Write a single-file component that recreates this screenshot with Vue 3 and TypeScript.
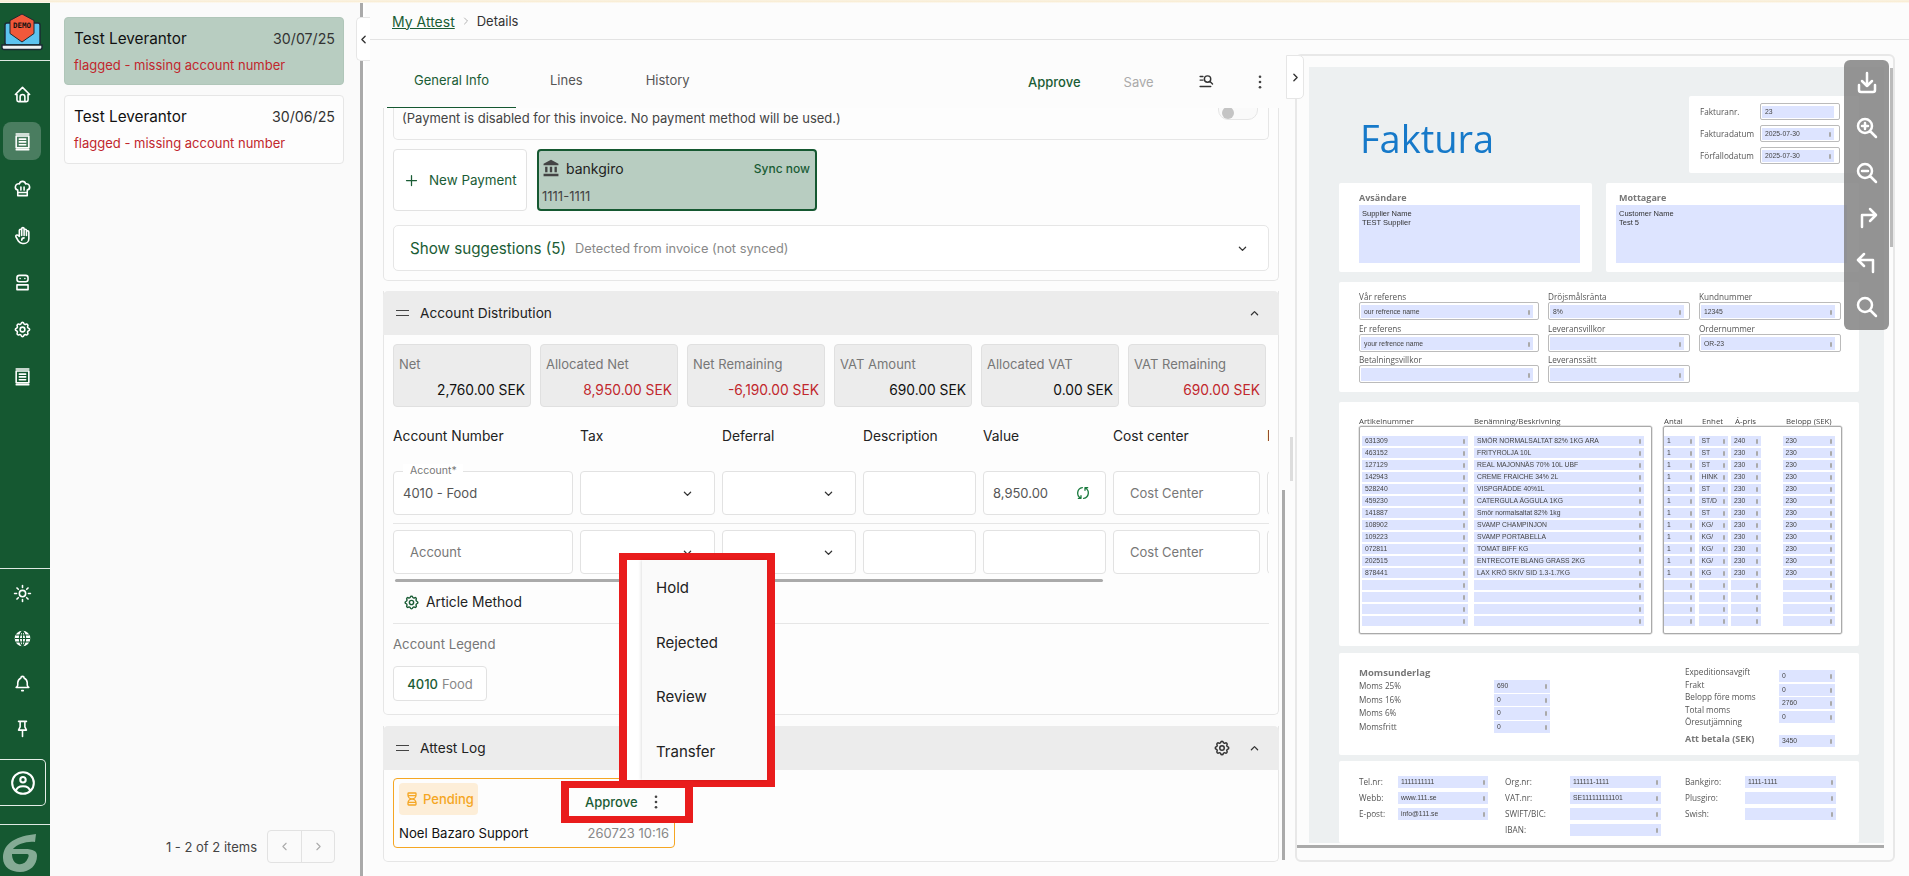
<script setup lang="ts">
const icons: Record<string, string> = {
  home: 'M5 12H3l9-9 9 9h-2v7a2 2 0 0 1-2 2H7a2 2 0 0 1-2-2zM9 21v-6a3 3 0 0 1 6 0v6',
  receipt: 'M4 5h16v15H4zM8 9h8M8 12.5h8M8 16h8M4 2.5h16M4 22.5h16',
  chef: 'M12 3c1.9 0 3.5 1.35 3.9 3.15a4 4 0 0 1 2.1 7.72V21H6v-7.13a4 4 0 1 1 2.1-7.72A4 4 0 0 1 12 3zM6.2 17H18M10 10v4M14 10v4',
  hand: 'M8 13V5.5a1.5 1.5 0 0 1 3 0V12M11 5.5v-2a1.5 1.5 0 1 1 3 0V12M14 5.5a1.5 1.5 0 0 1 3 0V12M17 7.5a1.5 1.5 0 0 1 3 0V16a6 6 0 0 1-6 6h-2a6 6 0 0 1-5-2.7c-.3-.5-1.4-2.4-3.3-5.7a1.5 1.5 0 0 1 .5-2 1.9 1.9 0 0 1 2.3.3L8 13M11 18c0-2 1-3 3-3',
  robot: 'M8 3h8a3 3 0 0 1 3 3v2a3 3 0 0 1-3 3H8a3 3 0 0 1-3-3V6a3 3 0 0 1 3-3zM9 7h.01M15 7h.01M5 15h14v6H5z',
  gear: 'M10.325 4.317c.426-1.756 2.924-1.756 3.35 0a1.724 1.724 0 0 0 2.573 1.066c1.543-.94 3.31.826 2.37 2.37a1.724 1.724 0 0 0 1.065 2.572c1.756.426 1.756 2.924 0 3.35a1.724 1.724 0 0 0-1.066 2.573c.94 1.543-.826 3.31-2.37 2.37a1.724 1.724 0 0 0-2.572 1.065c-.426 1.756-2.924 1.756-3.35 0a1.724 1.724 0 0 0-2.573-1.066c-1.543.94-3.31-.826-2.37-2.37a1.724 1.724 0 0 0-1.065-2.572c-1.756-.426-1.756-2.924 0-3.35a1.724 1.724 0 0 0 1.066-2.573c-.94-1.543.826-3.31 2.37-2.37 1 .608 2.296.07 2.572-1.065zM9 12a3 3 0 1 0 6 0 3 3 0 0 0-6 0',
  sun: 'M8 12a4 4 0 1 0 8 0 4 4 0 0 0-8 0M2 12h2.5M19.5 12H22M12 2v2.5M12 19.5V22M5 5l1.7 1.7M19 5l-1.7 1.7M17.3 17.3 19 19M6.7 17.3 5 19',
  bell: 'M10 5a2 2 0 1 1 4 0 7 7 0 0 1 4 6v3a4 4 0 0 0 2 3H4a4 4 0 0 0 2-3v-3a7 7 0 0 1 4-6M11 21h2',
  pin: 'M7 3h10M9 3v7l-2 4h10l-2-4V3M12 14v8',
  profile: 'M12 2a10 10 0 1 0 0 20 10 10 0 0 0 0-20zM9.5 9a2.5 2.5 0 1 0 5 0 2.5 2.5 0 0 0-5 0M5.5 19.5C6 16.5 8.5 15 12 15s6 1.5 6.5 4.5',
  download: 'M4 14v5a2 2 0 0 0 2 2h12a2 2 0 0 0 2-2v-5M7 10l5 5 5-5M12 2v13',
  zoomIn: 'M3 10a7 7 0 1 0 14 0 7 7 0 0 0-14 0M21 21l-6-6M7 10h6M10 7v6',
  zoomOut: 'M3 10a7 7 0 1 0 14 0 7 7 0 0 0-14 0M21 21l-6-6M7 10h6',
  right: 'M7 22V10h13M15 4l6 6-6 6',
  left: 'M18 22V10H4M9 4l-6 6 6 6',
  search: 'M3 10a7 7 0 1 0 14 0 7 7 0 0 0-14 0M21 21l-6-6',
  sync: 'M20 11a8.1 8.1 0 0 0-15.5-2M4 5v4h4M4 13a8.1 8.1 0 0 0 15.5 2M20 19v-4h-4',
  hourglass: 'M6.5 7h11M6.5 17h11M6 20v-2a6 6 0 1 1 12 0v2a1 1 0 0 1-1 1H7a1 1 0 0 1-1-1zM6 4v2a6 6 0 1 0 12 0V4a1 1 0 0 0-1-1H7a1 1 0 0 0-1 1z',
  listSearch: 'M3 5h4M3 10h4M3 19h15M9 8.5a4.5 4.5 0 1 0 9 0 4.5 4.5 0 0 0-9 0M17 12l3.5 3.5',
  down: 'M7 10l5 5 5-5',
  up: 'M7 14l5-5 5 5',
  lt: 'M15 6l-6 6 6 6',
  gt: 'M9 6l6 6-6 6',
  plus: 'M12 4v16M4 12h16',
}

const navTop = [
  { name: 'home', active: false },
  { name: 'receipt', active: true },
  { name: 'chef', active: false },
  { name: 'hand', active: false },
  { name: 'robot', active: false },
  { name: 'gear', active: false },
  { name: 'receipt', active: false },
]

const listItems = [
  { title: 'Test Leverantor', date: '30/07/25', selected: true },
  { title: 'Test Leverantor', date: '30/06/25', selected: false },
]

const stats = [
  { label: 'Net', value: '2,760.00 SEK', bad: false },
  { label: 'Allocated Net', value: '8,950.00 SEK', bad: true },
  { label: 'Net Remaining', value: '-6,190.00 SEK', bad: true },
  { label: 'VAT Amount', value: '690.00 SEK', bad: false },
  { label: 'Allocated VAT', value: '0.00 SEK', bad: false },
  { label: 'VAT Remaining', value: '690.00 SEK', bad: true },
]

const columns = ['Account Number', 'Tax', 'Deferral', 'Description', 'Value', 'Cost center', 'Project']
const menuItems = ['Hold', 'Rejected', 'Review', 'Transfer']
const toolIcons = ['download', 'zoomIn', 'zoomOut', 'right', 'left', 'search']

const metaRows = [
  { label: 'Fakturanr.', value: '23', mark: false },
  { label: 'Fakturadatum', value: '2025-07-30', mark: true },
  { label: 'Förfallodatum', value: '2025-07-30', mark: true },
]

const refFields = [
  { label: 'Vår referens', value: 'our refrence name' },
  { label: 'Dröjsmålsränta', value: '8%' },
  { label: 'Kundnummer', value: '12345' },
  { label: 'Er referens', value: 'your refrence name' },
  { label: 'Leveransvillkor', value: '' },
  { label: 'Ordernummer', value: 'OR-23' },
  { label: 'Betalningsvillkor', value: '' },
  { label: 'Leveranssätt', value: '' },
]

const lines: string[][] = [
  ['631309', 'SMÖR NORMALSALTAT 82% 1KG ARA', '1', 'ST', '240', '230'],
  ['463152', 'FRITYROLJA 10L', '1', 'ST', '230', '230'],
  ['127129', 'REAL MAJONNÄS 70% 10L UBF', '1', 'ST', '230', '230'],
  ['142943', 'CREME FRAICHE 34% 2L', '1', 'HINK', '230', '230'],
  ['528240', 'VISPGRÄDDE 40%1L', '1', 'ST', '230', '230'],
  ['459230', 'CATERGULA ÄGGULA 1KG', '1', 'ST/D', '230', '230'],
  ['141887', 'Smör normalsaltat 82% 1kg', '1', 'ST', '230', '230'],
  ['108902', 'SVAMP CHAMPINJON', '1', 'KG/', '230', '230'],
  ['109223', 'SVAMP PORTABELLA', '1', 'KG/', '230', '230'],
  ['072811', 'TOMAT BIFF KG', '1', 'KG/', '230', '230'],
  ['202515', 'ENTRECOTE BLANG GRASS 2KG', '1', 'KG/', '230', '230'],
  ['878441', 'LAX KRÖ SKIV SID 1.3-1.7KG', '1', 'KG', '230', '230'],
  ['', '', '', '', '', ''],
  ['', '', '', '', '', ''],
  ['', '', '', '', '', ''],
  ['', '', '', '', '', ''],
]

const momsLeft = [
  { label: 'Moms 25%', value: '690' },
  { label: 'Moms 16%', value: '0' },
  { label: 'Moms 6%', value: '0' },
  { label: 'Momsfritt', value: '0' },
]
const momsRightLabels = ['Expeditionsavgift', 'Frakt', 'Belopp före moms', 'Total moms', 'Öresutjämning']
const momsRightValues = ['0', '0', '2760', '0']

const footerCols = [
  [
    { label: 'Tel.nr:', value: '1111111111' },
    { label: 'Webb:', value: 'www.111.se' },
    { label: 'E-post:', value: 'info@111.se' },
  ],
  [
    { label: 'Org.nr:', value: '111111-1111' },
    { label: 'VAT.nr:', value: 'SE111111111101' },
    { label: 'SWIFT/BIC:', value: '' },
    { label: 'IBAN:', value: '' },
  ],
  [
    { label: 'Bankgiro:', value: '1111-1111' },
    { label: 'Plusgiro:', value: '' },
    { label: 'Swish:', value: '' },
  ],
]
</script>

<template>
  <div class="root">
    <div class="strip"></div>
    <div class="shell">
      <aside class="side">
        <div class="brand">
          <svg class="solid" viewBox="0 0 44 44" width="44" height="44">
            <rect x="5" y="12" width="35" height="22" rx="2" fill="#5cc4f0" stroke="#1b2a33" stroke-width="1.4" />
            <path d="M2 34h40v2.5a2 2 0 0 1-2 2H4a2 2 0 0 1-2-2z" fill="#eef3f5" stroke="#1b2a33" stroke-width="1.4" />
            <path d="M22 3l12 6.500v13L22 31 10 22.500v-13z" fill="#f1583a" stroke="#1b2a33" stroke-width="1" />
            <text x="22" y="17" text-anchor="middle" class="demo">DEMO</text>
          </svg>
        </div>
        <nav class="nav">
          <div v-for="(n, i) in navTop" :key="i" class="nav-item" :class="{ on: n.active }">
            <svg class="ic-nav" viewBox="0 0 24 24"><path :d="icons[n.name]" /></svg>
          </div>
        </nav>
        <div class="side-bottom">
          <div class="b-item"><svg class="ic-nav" viewBox="0 0 24 24"><path :d="icons.sun" /></svg></div>
          <div class="b-item">
            <svg class="solid" viewBox="0 0 24 24" width="17" height="17">
              <circle cx="12" cy="12" r="11" fill="#fff" />
              <path d="M1 12h22M2.500 7h19M2.500 17h19M12 1c-6 6-6 16 0 22M12 1c6 6 6 16 0 22M12 1v22" fill="none" stroke="#155831" stroke-width="1.500" />
            </svg>
          </div>
          <div class="b-item"><svg class="ic-nav" viewBox="0 0 24 24"><path :d="icons.bell" /></svg></div>
          <div class="b-item"><svg class="ic-nav" viewBox="0 0 24 24"><path :d="icons.pin" /></svg></div>
          <div class="profile"><svg class="ic-profile" viewBox="0 0 24 24"><path :d="icons.profile" /></svg></div>
        </div>
        <div class="side-logo">
          <svg class="solid" viewBox="0 0 34 38" width="34" height="38">
            <path fill="#85ab95" fill-rule="evenodd" d="M33 0C15 2 0 8 0 24c0 9 8 14 17 14 10 0 17-7 17-16 0-5-4-7-12-7H10c4-5 14-8 22-7zM9 20h15c2 0 2 2 1 4-2 5-6 7-10 6-4-1-6-5-6-10z" />
          </svg>
        </div>
      </aside>

      <section class="list">
        <div class="list-cards">
          <article v-for="(it, i) in listItems" :key="i" class="l-card" :class="{ sel: it.selected }">
            <div class="l-top">
              <span class="l-title">{{ it.title }}</span>
              <span class="l-date">{{ it.date }}</span>
            </div>
            <div class="l-flag">flagged - missing account number</div>
          </article>
        </div>
        <div class="pager">
          <span class="pager-text">1 - 2 of 2 items</span>
          <div class="pager-btns">
            <span class="pg"><svg class="ic-pg" viewBox="0 0 24 24"><path :d="icons.lt" /></svg></span>
            <span class="pg"><svg class="ic-pg" viewBox="0 0 24 24"><path :d="icons.gt" /></svg></span>
          </div>
        </div>
        <div class="collapse-left"><svg class="ic-col" viewBox="0 0 24 24"><path :d="icons.lt" /></svg></div>
      </section>

      <div class="splitter"></div>

      <main class="main">
        <header class="crumbs">
          <a class="crumb-link">My Attest</a>
          <svg class="ic-crumb" viewBox="0 0 24 24"><path :d="icons.gt" /></svg>
          <span class="crumb-cur">Details</span>
        </header>

        <div class="workspace">
          <div class="detail">
            <div class="tabs">
              <div class="tab active">General Info</div>
              <div class="tab t-lines">Lines</div>
              <div class="tab t-history">History</div>
              <div class="actions">
                <span class="act-approve">Approve</span>
                <span class="act-save">Save</span>
                <svg class="ic-act" viewBox="0 0 24 24"><path :d="icons.listSearch" /></svg>
                <svg class="ic-dots" viewBox="0 0 4 16"><circle cx="2" cy="2" r="1.500" /><circle cx="2" cy="8" r="1.500" /><circle cx="2" cy="14" r="1.500" /></svg>
              </div>
            </div>

            <div class="scroll">
              <section class="card pay-card">
                <div class="pay-off">
                  <span>(Payment is disabled for this invoice. No payment method will be used.)</span>
                  <span class="toggle"><i></i></span>
                </div>
                <div class="pay-row">
                  <div class="new-pay">
                    <svg class="ic-plus" viewBox="0 0 24 24"><path :d="icons.plus" /></svg>
                    <span>New Payment</span>
                  </div>
                  <div class="bank">
                    <div class="bank-top">
                      <svg class="ic-bank solid" viewBox="0 0 23 23"><path d="M4 10v7h3v-7H4zm6 0v7h3v-7h-3zM2 22h19v-3H2v3zm14-12v7h3v-7h-3zm-4.500-9L2 6v2h19V6l-9.500-5z" /></svg>
                      <span class="bank-name">bankgiro</span>
                      <span class="bank-sync">Sync now</span>
                    </div>
                    <div class="bank-no">1111-1111</div>
                  </div>
                </div>
                <div class="suggest">
                  <span class="sug-main">Show suggestions (5)</span>
                  <span class="sug-sub">Detected from invoice (not synced)</span>
                  <svg class="ic-chev sug-chev" viewBox="0 0 24 24"><path :d="icons.down" /></svg>
                </div>
              </section>

              <section class="card acc-card">
                <div class="sec-head">
                  <span class="burger"></span>
                  <span class="sec-title">Account Distribution</span>
                  <svg class="ic-chev sec-chev" viewBox="0 0 24 24"><path :d="icons.up" /></svg>
                </div>
                <div class="sec-body">
                  <div class="stats">
                    <div v-for="s in stats" :key="s.label" class="stat">
                      <div class="stat-label">{{ s.label }}</div>
                      <div class="stat-value" :class="{ bad: s.bad }">{{ s.value }}</div>
                    </div>
                  </div>

                  <div class="table">
                    <div class="t-row t-head">
                      <span v-for="c in columns" :key="c">{{ c }}</span>
                    </div>
                    <div class="t-row t-r1">
                      <div class="fld"><span class="float">Account*</span><span class="v">4010 - Food</span></div>
                      <div class="fld sel"><svg class="ic-chev" viewBox="0 0 24 24"><path :d="icons.down" /></svg></div>
                      <div class="fld sel"><svg class="ic-chev" viewBox="0 0 24 24"><path :d="icons.down" /></svg></div>
                      <div class="fld"></div>
                      <div class="fld val"><span class="v">8,950.00</span><svg class="ic-sync" viewBox="0 0 24 24"><path :d="icons.sync" /></svg></div>
                      <div class="fld ph">Cost Center</div>
                      <div class="fld"></div>
                    </div>
                    <div class="t-row t-r2">
                      <div class="fld ph">Account</div>
                      <div class="fld sel"><svg class="ic-chev" viewBox="0 0 24 24"><path :d="icons.down" /></svg></div>
                      <div class="fld sel"><svg class="ic-chev" viewBox="0 0 24 24"><path :d="icons.down" /></svg></div>
                      <div class="fld"></div>
                      <div class="fld"></div>
                      <div class="fld ph">Cost Center</div>
                      <div class="fld"></div>
                    </div>
                    <div class="h-bar"></div>
                  </div>

                  <div class="method">
                    <svg class="ic-method" viewBox="0 0 24 24"><path :d="icons.gear" /></svg>
                    <span>Article Method</span>
                  </div>
                  <div class="legend-title">Account Legend</div>
                  <div class="chip"><b>4010</b> <span>Food</span></div>
                </div>
              </section>

              <section class="card log-card">
                <div class="sec-head">
                  <span class="burger"></span>
                  <span class="sec-title">Attest Log</span>
                  <svg class="ic-gear" viewBox="0 0 24 24"><path :d="icons.gear" /></svg>
                  <svg class="ic-chev sec-chev2" viewBox="0 0 24 24"><path :d="icons.up" /></svg>
                </div>
                <div class="log-body">
                  <div class="log-item">
                    <div class="pending">
                      <svg class="ic-hour" viewBox="0 0 24 24"><path :d="icons.hourglass" /></svg>
                      <span>Pending</span>
                    </div>
                    <div class="log-bottom">
                      <span class="log-name">Noel Bazaro Support</span>
                      <span class="log-date">260723 10:16</span>
                    </div>
                    <div class="mark-approve">
                      <span class="ma-text">Approve</span>
                      <svg class="ic-dots" viewBox="0 0 4 16"><circle cx="2" cy="2" r="1.500" /><circle cx="2" cy="8" r="1.500" /><circle cx="2" cy="14" r="1.500" /></svg>
                    </div>
                    <div class="mark-menu">
                      <ul class="menu">
                        <li v-for="m in menuItems" :key="m">{{ m }}</li>
                      </ul>
                    </div>
                  </div>
                </div>
              </section>

              <div class="v-bar"></div>
              <div class="v-bar2"></div>
            </div>
          </div>

          <div class="viewer">
            <div class="collapse-right"><svg class="ic-col" viewBox="0 0 24 24"><path :d="icons.gt" /></svg></div>
            <div class="sheet">
              <div class="s-head">
                <div class="faktura">Faktura</div>
                <div class="s-card meta">
                  <div v-for="r in metaRows" :key="r.label" class="meta-row">
                    <span class="p-label">{{ r.label }}</span>
                    <div class="pbox"><div class="pf" :class="{ nomark: !r.mark }">{{ r.value }}</div></div>
                  </div>
                </div>
              </div>

              <div class="parties">
                <div class="s-card party">
                  <div class="p-title">Avsändare</div>
                  <div class="p-area">Supplier Name<br />TEST Supplier</div>
                </div>
                <div class="s-card party party2">
                  <div class="p-title">Mottagare</div>
                  <div class="p-area">Customer Name<br />Test 5</div>
                </div>
              </div>

              <div class="s-card refs">
                <div v-for="f in refFields" :key="f.label" class="ref-cell">
                  <div class="p-label">{{ f.label }}</div>
                  <div class="pbox"><div class="pf">{{ f.value }}</div></div>
                </div>
              </div>

              <div class="s-card items">
                <div class="items-head">
                  <span>Artikelnummer</span><span>Benämning/Beskrivning</span><span>Antal</span><span>Enhet</span><span>Á-pris</span><span>Belopp (SEK)</span>
                </div>
                <div class="items-boxes">
                  <div class="ibox ibox1">
                    <template v-for="(l, i) in lines" :key="'a' + i">
                      <div class="pf">{{ l[0] }}</div>
                      <div class="pf">{{ l[1] }}</div>
                    </template>
                  </div>
                  <div class="ibox ibox2">
                    <template v-for="(l, i) in lines" :key="'b' + i">
                      <div class="pf">{{ l[2] }}</div>
                      <div class="pf">{{ l[3] }}</div>
                      <div class="pf">{{ l[4] }}</div>
                      <div class="pf far">{{ l[5] }}</div>
                    </template>
                  </div>
                </div>
              </div>

              <div class="s-card moms">
                <div class="moms-left">
                  <div class="p-title m-title">Momsunderlag</div>
                  <div v-for="m in momsLeft" :key="m.label" class="moms-row">
                    <span class="p-label">{{ m.label }}</span>
                    <div class="pf">{{ m.value }}</div>
                  </div>
                </div>
                <div class="moms-right">
                  <div class="mr-labels">
                    <span v-for="l in momsRightLabels" :key="l" class="p-label">{{ l }}</span>
                    <span class="p-title att">Att betala (SEK)</span>
                  </div>
                  <div class="mr-values">
                    <div v-for="(v, i) in momsRightValues" :key="i" class="pf">{{ v }}</div>
                    <div class="pf att-v">3450</div>
                  </div>
                </div>
              </div>

              <div class="s-card foot">
                <div v-for="(col, i) in footerCols" :key="i" class="foot-col" :class="'fc' + i">
                  <div v-for="f in col" :key="f.label" class="foot-row">
                    <span class="p-label">{{ f.label }}</span>
                    <div class="pf">{{ f.value }}</div>
                  </div>
                </div>
              </div>
            </div>
            <div class="viewer-hbar"></div>
            <div class="viewer-vbar"></div>
            <div class="toolbar">
              <svg v-for="t in toolIcons" :key="t" class="ic-tool" viewBox="0 0 24 24"><path :d="icons[t]" /></svg>
            </div>
          </div>
        </div>
      </main>
    </div>
  </div>
</template>

<style>
html, body { margin: 0; padding: 0; background: #fcfcfc; }
</style>

<style scoped>
* { box-sizing: border-box; }
.root { width: 1909px; height: 876px; overflow: hidden; display: flex; flex-direction: column; font-family: Inter, "Liberation Sans", sans-serif; color: #222; background: #fcfcfc; }
.strip { height: 3px; flex: none; background: linear-gradient(#fbf5e8, #f8ebd0 40%, #fdfbf6); }
.shell { flex: 1; min-height: 0; display: flex; }

svg:not(.solid) path { fill: none; stroke-linecap: round; stroke-linejoin: round; }

/* sidebar */
.side { width: 50px; flex: none; background: #155831; display: flex; flex-direction: column; }
.brand { height: 58px; flex: none; border-bottom: 1px solid #dfe9e3; padding: 8px 0 0 0; overflow: hidden; }
.demo { font: 700 7.500px "DejaVu Sans Mono", monospace; fill: #111; }
.nav { padding-top: 14px; display: flex; flex-direction: column; gap: 9px; }
.nav-item { width: 38px; height: 38px; margin-left: 3px; border-radius: 8px; display: flex; align-items: center; justify-content: center; }
.nav-item.on { background: #4a7d60; }
.ic-nav { width: 19px; height: 19px; }
.ic-nav path { stroke: #fff; stroke-width: 2; }
.side-bottom { margin-top: auto; border-top: 1px solid #dfe9e3; padding-top: 1px; display: flex; flex-direction: column; }
.b-item { height: 45px; width: 45px; display: flex; align-items: center; justify-content: center; }
.b-item:first-child { margin-top: 1px; }
.profile { width: 46px; height: 47px; margin-top: 8px; border: 1px solid #e5eee8; border-left: 0; border-radius: 0 5px 5px 0; display: flex; align-items: center; justify-content: center; }
.ic-profile { width: 26px; height: 26px; }
.ic-profile path { stroke: #fff; stroke-width: 1.900; }
.side-logo { margin-top: 18px; height: 52px; flex: none; border-top: 1px solid #dfe9e3; padding: 9px 0 0 3px; overflow: hidden; }

/* list */
.list { width: 310px; flex: none; background: #fafafa; position: relative; display: flex; flex-direction: column; }
.list-cards { padding: 14px 16px 0 14px; display: flex; flex-direction: column; gap: 10px; }
.l-card { height: 69px; border: 1px solid #e6e6e6; border-radius: 4px; background: #fdfdfd; padding: 12px 8px 0 9px; }
.l-card.sel { height: 68px; background: #b8cdc1; border-color: #b0c6b9; }
.l-top { display: flex; justify-content: space-between; align-items: center; }
.l-title { font-size: 15.300px; font-weight: 400; color: #111; line-height: 18px; }
.l-date { font-size: 14.200px; color: #333; line-height: 18px; }
.l-flag { margin-top: 9px; font-size: 13px; line-height: 16px; color: #c1272d; }
.pager { margin-top: auto; height: 33px; margin-bottom: 13px; padding-right: 25px; display: flex; align-items: center; justify-content: flex-end; gap: 10px; }
.pager-text { font-size: 13px; color: #444; }
.pager-btns { display: flex; height: 33px; border: 1px solid #e2e2e2; border-radius: 4px; }
.pg { width: 33px; display: flex; align-items: center; justify-content: center; }
.pg + .pg { border-left: 1px solid #e2e2e2; }
.ic-pg { width: 13px; height: 13px; }
.ic-pg path { stroke: #aaa; stroke-width: 2; }
.collapse-left { position: absolute; right: -10px; top: 14px; width: 14px; height: 44px; background: #fff; border: 1px solid #e6e6e6; border-radius: 5px 0 0 5px; border-right: 0; display: flex; align-items: center; justify-content: center; z-index: 3; }
.ic-col { width: 13px; height: 13px; }
.ic-col path { stroke: #333; stroke-width: 2.500; }
.splitter { width: 5px; flex: none; border-left: 3px solid #aaa; background: #fff; }

/* main */
.main { flex: 1; min-width: 0; display: flex; flex-direction: column; }
.crumbs { height: 37px; flex: none; border-bottom: 1px solid #e3e3e3; padding: 0 0 0 27px; display: flex; align-items: center; gap: 5px; font-size: 14px; }
.crumb-link { color: #1a5c35; text-decoration: underline; }
.ic-crumb { width: 12px; height: 12px; }
.ic-crumb path { stroke: #999; stroke-width: 1.500; }
.crumb-cur { color: #333; font-size: 13px; }
.workspace { flex: 1; min-height: 0; display: flex; }

.detail { width: 925px; flex: none; display: flex; flex-direction: column; }
.tabs { height: 68px; flex: none; padding: 0 0 0 22px; display: flex; align-items: stretch; position: relative; }
.tab { font-size: 13px; color: #555; padding-top: 32px; line-height: 16px; }
.tab.active { width: 129px; text-align: center; color: #1a5c35; font-weight: 400; border-bottom: 1px solid #155831; }
.t-lines { margin-left: 34px; }
.t-history { margin-left: 63px; }
.actions { position: absolute; right: 0; top: 0; height: 100%; width: 262px; display: flex; align-items: center; padding-top: 15px; font-size: 13px; }
.act-approve { color: #1a5c35; font-weight: 500; margin-left: 0; }
.act-save { color: #aaa; margin-left: 43px; }
.ic-act { width: 17px; height: 17px; margin-left: 44px; }
.ic-act path { stroke: #333; stroke-width: 2; }
.ic-dots { width: 4px; height: 14px; margin-left: 43px; fill: #444; }

.scroll { flex: 1; min-height: 0; position: relative; padding: 0 11px 0 18px; display: flex; flex-direction: column; gap: 10px; }
.card { border: 1px solid #e6e6e6; border-top: 0; border-radius: 0 0 5px 5px; background: #fdfdfd; }
.pay-card { padding: 0 9px 9px; height: 173px; }
.pay-off { height: 32px; border: 1px solid #e6e6e6; border-top: 0; border-radius: 0 0 5px 5px; display: flex; justify-content: space-between; padding: 0 10px 0 8px; font-size: 13px; color: #444; line-height: 20px; overflow: hidden; }
.toggle { width: 40px; height: 26px; margin-top: -14px; border: 1px solid #e6e6e6; border-radius: 10px; padding: 6px 3px; background: #fafafa; }
.toggle i { display: block; width: 12px; height: 12px; background: #c4c4c4; border-radius: 50%; margin-top: 6px; }
.pay-row { display: flex; gap: 10px; margin-top: 9px; height: 62px; }
.new-pay { width: 134px; border: 1px solid #e2e2e2; border-radius: 4px; background: #fff; display: flex; align-items: center; padding-left: 10px; gap: 10px; color: #1a5c35; font-size: 13.400px; font-weight: 400; }
.ic-plus { width: 15px; height: 15px; }
.ic-plus path { stroke: #1a5c35; stroke-width: 2; }
.bank { width: 280px; border: 2px solid #155831; border-radius: 4px; background: #b8cdc1; padding: 5px 5px 0 3px; }
.bank-top { display: flex; align-items: center; height: 24px; }
.ic-bank { width: 18px; height: 18px; fill: #444; margin-right: 6px; }
.bank-name { font-size: 14px; color: #222; }
.bank-sync { margin-left: auto; font-size: 12px; font-weight: 500; color: #1a5c35; }
.bank-no { margin-top: 8px; font-size: 13px; color: #444; }
.suggest { margin-top: 14px; height: 46px; border: 1px solid #e6e6e6; border-radius: 5px; background: #fff; display: flex; align-items: center; padding-left: 16px; }
.sug-main { font-size: 15.200px; font-weight: 400; color: #1a5c35; }
.sug-sub { font-size: 12.800px; color: #888; margin-left: 9px; }
.sug-chev { margin-left: auto; margin-right: 18px; }
.ic-chev { width: 15px; height: 15px; }
.ic-chev path { stroke: #333; stroke-width: 2; }

.sec-head { height: 44px; background: #ececec; border-radius: 5px 5px 0 0; margin: 0 -1px; display: flex; align-items: center; padding-left: 13px; position: relative; }
.burger { width: 13px; height: 6px; border-top: 1.500px solid #444; border-bottom: 1.500px solid #444; }
.sec-title { margin-left: 11px; font-size: 13.700px; font-weight: 400; color: #222; }
.sec-chev { margin-left: auto; margin-right: 17px; }
.sec-chev2 { margin-left: 16px; margin-right: 17px; }
.ic-gear { margin-left: auto; width: 18px; height: 18px; }
.ic-gear path { stroke: #333; stroke-width: 2; }
.acc-card { height: 424px; }
.sec-body { padding: 9px 9px 0; }
.stats { display: grid; grid-template-columns: repeat(6, 138px); column-gap: 9px; }
.stat { height: 63px; background: #ececec; border: 1px solid #e0e0e0; border-radius: 4px; padding: 10px 5px 0; }
.stat-label { font-size: 13px; color: #777; line-height: 18px; }
.stat-value { margin-top: 8px; text-align: right; font-size: 13.800px; font-weight: 400; color: #111; line-height: 18px; }
.stat-value.bad { color: #c1272d; }

.table { position: relative; overflow: hidden; padding-top: 8px; margin-top: 11px; }
.t-row { display: grid; grid-template-columns: 180px 135px 134px 113px 123px 147px 60px; column-gap: 7px; white-space: nowrap; }
.t-head { height: 20px; font-size: 13.800px; font-weight: 400; color: #222; line-height: 20px; margin-bottom: 25px; }
.t-r1 { padding-bottom: 8px; border-bottom: 1px solid #e6e6e6; }
.t-r2 { padding-top: 6px; padding-bottom: 12px; }
.fld { height: 44px; border: 1px solid #e2e2e2; border-radius: 4px; background: #fff; position: relative; display: flex; align-items: center; padding: 0 9px; font-size: 13px; color: #555; }
.float { position: absolute; left: 9px; top: -8px; background: #fff; padding: 0 6px 0 7px; font-size: 10.500px; line-height: 14px; color: #777; }
.fld.ph { color: #777; padding-left: 16px; }
.fld.sel { justify-content: flex-end; padding-right: 19px; }
.fld.val { justify-content: space-between; padding-right: 14px; }
.ic-sync { width: 16px; height: 16px; transform: rotate(90deg); }
.ic-sync path { stroke: #1a7a3e; stroke-width: 2; }
.h-bar { position: absolute; left: 2px; bottom: 4px; width: 708px; height: 3px; border-radius: 2px; background: #aaa; }

.method { margin-top: 6px; height: 20px; display: flex; align-items: center; padding-left: 10px; gap: 6px; font-size: 13.800px; font-weight: 400; color: #222; }
.ic-method { width: 17px; height: 17px; }
.ic-method path { stroke: #1a5c35; stroke-width: 2; }
.legend-title { border-top: 1px solid #e6e6e6; margin-top: 11px; padding-top: 11px; font-size: 13.200px; font-weight: 400; color: #777; line-height: 18px; }
.chip { margin-top: 13px; width: 94px; height: 35px; border: 1px solid #e2e2e2; border-radius: 4px; background: #fff; display: flex; align-items: center; justify-content: center; gap: 4px; font-size: 13px; }
.chip b { color: #1a5c35; font-weight: 500; }
.chip span { color: #888; }

.log-card { height: 136px; margin-top: 1px; }
.log-body { padding: 8px 9px 0; }
.log-item { position: relative; width: 282px; height: 70px; border: 1px solid #f5a623; border-radius: 4px; background: #fdfdfd; padding: 4px 5px; }
.pending { width: 79px; height: 32px; background: #fdeed8; border-radius: 4px; display: flex; align-items: center; padding-left: 5px; gap: 3px; color: #f5a623; font-size: 13px; font-weight: 500; }
.ic-hour { width: 16px; height: 16px; }
.ic-hour path { stroke: #f5a623; stroke-width: 2; }
.log-bottom { margin-top: 9px; display: flex; justify-content: space-between; font-size: 13.200px; line-height: 18px; }
.log-name { color: #111; font-weight: 400; }
.log-date { color: #888; font-size: 13px; }

.mark-approve { position: absolute; left: 167px; top: 2px; width: 132px; height: 42px; border: solid #e91c1c; border-width: 7px 8px; background: #fdfdfd; display: flex; align-items: center; padding-left: 16px; z-index: 5; }
.ma-text { color: #1a5c35; font-size: 13px; font-weight: 500; }
.mark-approve .ic-dots { margin-left: 16px; }
.mark-menu { position: absolute; left: 225px; top: -226px; width: 156px; height: 234px; border: solid #e91c1c; border-width: 7px 8px; background: #fff; z-index: 4; padding-left: 15px; }
.menu { list-style: none; margin: 0; height: 100%; background: #fafafa; box-shadow: -1px 0 3px rgba(0,0,0,.12); font-size: 15px; color: #222; display: flex; flex-direction: column; padding: 0 0 0 14px; }
.menu li { height: 54.500px; line-height: 55px; }

.v-bar { position: absolute; left: 917px; top: 382px; width: 3px; height: 370px; background: #aaa; }
.v-bar2 { position: absolute; left: 925px; top: 329px; width: 3px; height: 44px; background: #ddd; z-index: 2; }

/* viewer */
.viewer { position: relative; width: 600px; flex: none; margin: 14px 0 0 5px; height: 808px; border: 2px solid #e8e8e8; border-radius: 6px; background: #fcfcfc; }
.collapse-right { position: absolute; left: -11px; top: -1px; width: 18px; height: 44px; background: #fff; border: 1px solid #e6e6e6; border-radius: 0 5px 5px 0; display: flex; align-items: center; justify-content: center; z-index: 3; }
.sheet { position: absolute; left: 12px; top: 11px; width: 575px; height: 776px; background: #edf0f1; overflow: hidden; padding: 29px 25px 0 30px; display: flex; flex-direction: column; color: #555; font-family: "Open Sans", sans-serif; filter: blur(.35px); }
.viewer-hbar { position: absolute; left: 0; top: 789px; width: 587px; height: 3px; background: #aaa; }
.viewer-vbar { position: absolute; left: 593px; top: 12px; width: 3px; height: 179px; background: #bbb; }
.toolbar { position: absolute; left: 547px; top: 4px; width: 45px; height: 270px; border-radius: 6px; background: rgba(130,130,130,.85); display: flex; flex-direction: column; align-items: center; justify-content: space-around; padding: 1px 0; z-index: 4; }
.ic-tool { width: 24px; height: 24px; }
.ic-tool path { stroke: #fff; stroke-width: 2.500; }

.s-card { background: #fff; border-radius: 2px; flex: none; }
.s-head { height: 77px; flex: none; display: flex; justify-content: space-between; }
.faktura { font-size: 38px; font-weight: 400; line-height: 50px; margin: 17px 0 0 21px; color: #1679c9; }
.meta { width: 170px; padding: 7px 0 0 11px; display: flex; flex-direction: column; gap: 5px; }
.meta-row { display: flex; align-items: center; }
.meta-row .p-label { width: 60px; }
.meta-row .pbox { width: 80px; height: 17px; padding-top: 2px; }
.p-label { font-size: 8.200px; line-height: 11px; color: #555; white-space: nowrap; }
.pbox { border: 1.500px solid #bbb; border-radius: 2px; background: #fff; padding: 2px 5px 1px 1px; height: 18px; }
.pf { background: #dde4ff; min-width: 0; height: 100%; display: flex; align-items: center; justify-content: space-between; padding: 1px 3px 0; font: 6.800px/1 "Liberation Sans", sans-serif; color: #444; white-space: nowrap; overflow: hidden; }
.pf::after { content: ""; flex: none; margin-left: auto; width: 2px; height: 5px; border-radius: 1px; background: #aaa; }
.pf.nomark::after { display: none; }
.parties { margin-top: 10px; display: flex; gap: 14px; flex: none; }
.party { width: 253px; height: 89px; padding: 9px 12px 0 20px; }
.party2 { padding-left: 10px; }
.p-title { font-size: 9px; font-weight: 700; color: #777; line-height: 12px; padding-left: 0; }
.party2 .p-title { padding-left: 3px; }
.p-area { height: 58px; margin-top: 1px; background: #dde4ff; font: 7.500px/9px "Liberation Sans", sans-serif; color: #333; padding: 4px 3px; }

.refs { margin-top: 10px; height: 110px; padding: 9px 0 0 20px; display: grid; grid-template-columns: 180px 142px 142px; column-gap: 9px; grid-template-rows: 32px 31px 28px; }
.ref-cell .pbox { height: 18px; }

.items { margin-top: 10px; height: 244px; padding: 14px 0 0 20px; }
.items-head { display: grid; grid-template-columns: 115px 190px 38px 33px 51px 1fr; font-size: 7.800px; line-height: 10px; color: #444; white-space: nowrap; }
.items-boxes { display: flex; gap: 11px; }
.ibox { height: 208px; border: 1px solid #aaa; border-radius: 2px; box-shadow: 0 0 0 .5px #ccc; padding-top: 9px; display: grid; grid-auto-rows: 10px; row-gap: 2px; align-content: start; }
.ibox1 { width: 293px; grid-template-columns: 106px 170px; column-gap: 6px; padding-left: 2px; }
.ibox2 { width: 179px; grid-template-columns: 31px 29px 30px 70px; column-gap: 3.500px; }
.far { margin-left: 18px; }

.moms { margin-top: 7px; height: 102px; padding: 13px 0 0 20px; display: flex; }
.moms-left { width: 326px; }
.m-title { font-size: 9.500px; line-height: 14px; }
.moms-row { display: flex; height: 13.500px; align-items: flex-start; }
.moms-row .p-label { width: 135px; }
.moms-row .pf { width: 56px; height: 12.500px; }
.moms-right { display: flex; margin-top: -1px; }
.mr-labels { width: 94px; display: flex; flex-direction: column; padding-top: 1px; }
.mr-labels .p-label { height: 12.500px; line-height: 12.500px; }
.att { font-size: 9px; margin-top: 4px; white-space: nowrap; }
.mr-values { width: 56px; display: flex; flex-direction: column; gap: 1.500px; padding-top: 5px; }
.mr-values .pf { height: 12px; flex: none; }
.mr-values .att-v { margin-top: 11px; }

.foot { margin-top: 6px; height: 82px; padding: 15px 0 0 20px; display: flex; }
.foot-col { display: flex; flex-direction: column; gap: 4px; }
.foot-row { display: flex; height: 12px; }
.foot-row .pf { height: 12px; width: 91px; }
.fc0 { width: 146px; }
.fc0 .p-label { width: 39px; }
.fc0 .pf { width: 90px; }
.fc1 { width: 180px; }
.fc1 .p-label { width: 65px; }
.fc2 .p-label { width: 60px; }
</style>
